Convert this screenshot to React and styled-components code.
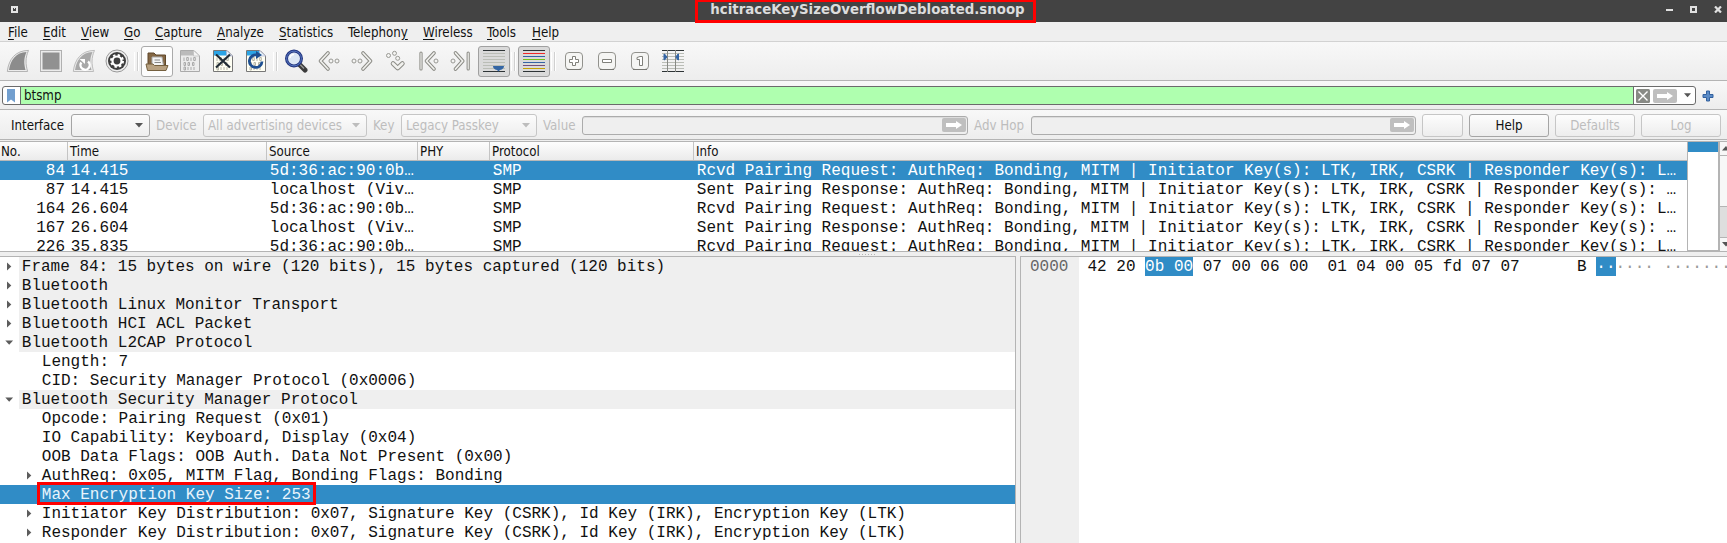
import React from "react";
import styled, { createGlobalStyle, css } from "styled-components";

const Global = createGlobalStyle`
  * { box-sizing: border-box; }
  html, body { margin: 0; padding: 0; overflow: hidden; background: #efefef; }
  #root { height: 543px; }
`;

const App_ = styled.div`
  width: 1727px;
  height: 543px;
  overflow: hidden;
  display: flex;
  flex-direction: column;
  background: #efefef;
  color: #111;
  font: 13.2px "DejaVu Sans Condensed", "DejaVu Sans", sans-serif;
  font-stretch: condensed;
  white-space: nowrap;
`;

const TitleBar = styled.header`
  height: 22px;
  flex: none;
  background: #434343;
  display: flex;
  align-items: center;
  padding: 0 5px 3px 11px;
  position: relative;
  svg { display: block; }
`;
const Title = styled.h1`
  position: absolute;
  left: 695px;
  top: -1px;
  width: 341px;
  height: 24px;
  margin: 0;
  padding-left: 4px;
  border: 3px solid #f00;
  text-align: center;
  font-family: "DejaVu Sans", sans-serif;
  font-stretch: normal;
  font-size: 13.33px;
  font-weight: bold;
  line-height: 16px;
  color: #dcdcdc;
`;
const WindowButtons = styled.div`
  margin-left: auto;
  display: flex;
  gap: 17px;
`;

const MenuBar = styled.nav`
  height: 20px;
  flex: none;
  display: flex;
  border-bottom: 1px solid #d2d2d2;
  padding-left: 8px;
`;
const MenuItem = styled.span`
  width: ${(p) => p.$w}px;
  flex: none;
  line-height: 21px;
  u { text-underline-offset: 2px; }
`;

const Toolbar = styled.div`
  height: 39px;
  flex: none;
  display: flex;
  align-items: center;
  gap: 1px;
  padding-left: 2px;
  background: linear-gradient(#f8f8f8, #ededed);
  border-bottom: 1px solid #b4b4b4;
`;
const ToolButton = styled.button`
  width: 32px;
  height: 31px;
  flex: none;
  padding: 0;
  display: flex;
  align-items: center;
  justify-content: center;
  border-radius: 3px;
  border: 1px solid transparent;
  background: none;
  ${(p) => p.$state === "raised" && css`border-color: #aaa; background: #fdfdfd;`}
  ${(p) => p.$state === "pressed" && css`border-color: #a0a0a0; background: #dadada;`}
  svg { display: block; flex: none; }
`;
const ToolSeparator = styled.i`
  width: 6px;
  height: 19px;
  flex: none;
  border-left: 2px solid transparent;
  background: linear-gradient(90deg, transparent 1px, #d0d0d0 1px, #d0d0d0 2px, #fff 2px, #fff 3px, transparent 3px);
`;

const FilterBar = styled.div`
  height: 29px;
  flex: none;
  display: flex;
  align-items: center;
  padding: 1px 0 0 2px;
  gap: 6px;
  background: linear-gradient(#f8f8f8, #ededed);
  border-bottom: 1px solid #b4b4b4;
`;
const FilterField = styled.div`
  width: 1694px;
  height: 19px;
  flex: none;
  display: flex;
  border: 1px solid #6b6b6b;
  border-radius: 3px;
  background: #fff;
  overflow: hidden;
`;
const BookmarkCell = styled.span`
  width: 17px;
  display: flex;
  justify-content: center;
  align-items: center;
`;
const FilterText = styled.span`
  flex: 1;
  padding-left: 3px;
  line-height: 17px;
  background: #afffaf;
  border: solid #6b6b6b;
  border-width: 0 1px;
`;
const FilterActions = styled.span`
  width: 61px;
  display: flex;
  align-items: center;
  padding-left: 2px;
`;

const WirelessBar = styled.div`
  height: 30px;
  flex: none;
  display: flex;
  align-items: center;
  padding: 1px 0 0 11px;
  background: linear-gradient(#f8f8f8, #ededed);
  border-bottom: 1px solid #b4b4b4;
`;
const Label = styled.span`
  width: ${(p) => p.$w}px;
  flex: none;
  padding-top: 1px;
  line-height: 20px;
  color: ${(p) => (p.$off ? "#bdbdbd" : "#111")};
`;
const box = css`
  width: ${(p) => p.$w}px;
  flex: none;
  display: flex;
  align-items: center;
  border-radius: 3px;
  margin-right: 6px;
`;
const Combo = styled.div`
  ${box}
  height: 23px;
  justify-content: space-between;
  padding: 1px 6px 0 4px;
  border: 1px solid ${(p) => (p.$off ? "#c6c6c6" : "#a5a5a5")};
  color: #bdbdbd;
  background: linear-gradient(#fcfcfc, #eee);
`;
const Field = styled.div`
  ${box}
  height: 19px;
  justify-content: flex-end;
  padding-right: 1px;
  border: 1px solid #acacac;
  background: #efefef;
  box-shadow: inset 0 1px #dcdcdc;
`;
const PushButton = styled.button`
  ${box}
  height: 23px;
  padding: 1px 0 0;
  justify-content: center;
  font: inherit;
  border: 1px solid ${(p) => (p.$off ? "#c6c6c6" : "#a5a5a5")};
  color: ${(p) => (p.$off ? "#bdbdbd" : "#111")};
  background: linear-gradient(#fdfdfd, #ededed);
`;

const PacketPane = styled.section`
  height: 111px;
  flex: none;
  display: flex;
  margin-top: 1px;
  border: solid #b4b4b4;
  border-width: 1px 0;
  background: #fff;
`;
const PacketTable = styled.div`
  width: 1687px;
  flex: none;
  overflow: hidden;
`;
const gridColumns = css`
  display: grid;
  grid-template-columns: 68px 199px 151px 72px 204px 1fr;
`;
const HeaderRow = styled.div`
  ${gridColumns}
  height: 19px;
  background: linear-gradient(#fdfdfd, #ebebeb);
  border-bottom: 1px solid #b8b8b8;
`;
const HeaderCell = styled.span`
  height: 18px;
  padding-left: 2px;
  line-height: 20px;
  border-right: 1px solid #c4c4c4;
  &:first-child { padding-left: 1px; }
  &:last-child { border: 0; }
`;
const mono = css`
  font-family: "Liberation Mono", monospace;
  font-size: 16px;
  line-height: 21px;
  white-space: pre;
`;
const PacketRow = styled.div`
  ${gridColumns}
  ${mono}
  height: 19px;
  color: ${(p) => (p.$selected ? "#fff" : "#111")};
  background: ${(p) => (p.$selected ? "#308cc6" : "#fff")};
`;
const Cell = styled.span`
  height: 19px;
  padding: 0 3px 0 2.8px;
  text-align: ${(p) => (p.$right ? "right" : "left")};
`;
const MiniMap = styled.div`
  width: 32px;
  flex: none;
  border: solid #b4b4b4;
  border-width: 0 1px 1px;
  background: linear-gradient(#308cc6 10px, #fff 10px);
`;
const ScrollBar = styled.div`
  width: 8px;
  flex: none;
  display: flex;
  flex-direction: column;
  border-left: 1px solid #b4b4b4;
  background: #dedede;
`;
const ScrollEnd = styled.div`
  height: 13px;
  flex: none;
  padding: 4px 0 0 2px;
  overflow: hidden;
  background: #f7f7f7;
  svg { display: block; }
`;
const ScrollThumb = styled.div`
  height: 52px;
  border: solid #b4b4b4;
  border-width: 1px 0;
  background: #f7f7f7;
`;
const ScrollTrack = styled.div`
  flex: 1;
  border-bottom: 1px solid #b4b4b4;
`;

const Splitter = styled.div`
  height: 4px;
  flex: none;
  display: flex;
  justify-content: center;
  align-items: center;
  padding-left: 7px;
`;
const Grip = styled.i`
  width: 17px;
  height: 1px;
  background: repeating-linear-gradient(90deg, #b4b4b4 0 1px, transparent 1px 3px);
`;

const DetailArea = styled.section`
  flex: 1;
  min-height: 0;
  display: flex;
  gap: 4px;
`;
const Tree = styled.div`
  ${mono}
  width: 1016px;
  flex: none;
  overflow: hidden;
  border: solid #b4b4b4;
  border-width: 1px 1px 0 0;
  background: #fff;
`;
const TreeRow = styled.div`
  height: 19px;
  display: flex;
  padding-left: ${(p) => p.$depth * 20}px;
  color: ${(p) => (p.$selected ? "#e8f4fc" : "#111")};
  background: ${(p) => (p.$selected ? "#308cc6" : "#fff")};
`;
const Expander = styled.span`
  width: 19px;
  flex: none;
  display: flex;
  align-items: center;
  padding-left: 5px;
`;
const TreeText = styled.span`
  flex: 1;
  position: relative;
  padding-left: 2.8px;
  background: ${(p) => (p.$shaded ? "#efefef" : "transparent")};
`;
const Highlight = styled.i`
  position: absolute;
  left: -2px;
  top: -3px;
  width: 279px;
  height: 23px;
  border: 3px solid #f00;
`;
const HexPane = styled.div`
  ${mono}
  flex: 1;
  display: flex;
  overflow: hidden;
  border: solid #b4b4b4;
  border-width: 1px 0 0 1px;
  background: #fff;
`;
const OffsetGutter = styled.div`
  width: 58px;
  flex: none;
  padding-left: 9px;
  color: #666;
  background: #efefef;
`;
const HexBytes = styled.div`
  width: 489.6px;
  flex: none;
  margin-left: 8.5px;
`;
const HexText = styled.div`
  color: #999;
  b { font-weight: normal; color: #111; }
`;
const Selected = styled.mark`
  display: inline-block;
  height: 19px;
  vertical-align: top;
  color: #fff;
  background: #308cc6;
`;

const Caret = ({ color = "#555", dir = "down", size = 8 }) => {
  const d = { down: "M0 0H8L4 4.5Z", up: "M0 4.5H8L4 0Z" }[dir];
  return <svg width={size} height="5" viewBox="0 0 8 5"><path d={d} fill={color} /></svg>;
};
const TreeArrow = ({ open }) => (
  <svg width="9" height="9" viewBox="0 0 9 9">
    <path d={open ? "M0.3 2.6H8.1L4.2 6.8Z" : "M2 0.5V8.5L6.3 4.5Z"} fill="#5c5c5c" />
  </svg>
);
const ApplyArrow = () => (
  <svg width="24" height="14" viewBox="0 0 24 14">
    <rect width="24" height="14" rx="2" fill="#bfbfbf" />
    <path d="M4 5H14V3L20 7L14 11V9H4Z" fill="#fff" />
  </svg>
);

const Svg = ({ children }) => <svg width="24" height="24" viewBox="0 0 24 24" fill="none">{children}</svg>;
const finPath = "M3 21C4.5 11 10 3.5 20.5 3C17.5 9.5 18 15 19.5 21Z";
const finEdge = "M1.3 22.5C2.8 10 9.5 1.6 22.5 1.4C19.2 9 19.5 15 21.6 22.5Z";

const Page = ({ children, faded }) => (
  <Svg>
    <path d="M2.5 1.5H16L21.5 7V22.5H2.5Z" fill={faded ? "#ececec" : "#fffff4"} stroke={faded ? "#aaa" : "#777"} />
    <path d="M3 2H15.5L16.5 6.5H3Z" fill={faded ? "#bbb" : "#2ba4e5"} />
    <path d="M15.5 1.5V7H21.5Z" fill={faded ? "#f4f4f4" : "#e8f5fb"} stroke={faded ? "#bbb" : "#aac"} strokeWidth=".6" />
    <path d="M6 8.5V12M8.7 8.5H10.3V11.5H8.7ZM13 8.5V12M15.7 8.5H17.3V11.5H15.7ZM6 13.5H7.5V16.5H6ZM10 13.5H11.5V16.5H10ZM14.5 13.5H16V16.5H14.5ZM6 18H7.5V21H6ZM10 18V21M13 18V21M16 18V21" stroke={faded ? "#aaa" : "#b6b6a6"} />
    {children}
  </Svg>
);
const Outlined = ({ d, width = 4.2, dots = [] }) => (
  <>
    {dots.map(([x, y]) => <circle key={`${x}-${y}`} cx={x} cy={y} r="2" fill="#f4f4f2" stroke="#999994" />)}
    <path d={d} stroke="#8c8c86" strokeWidth={width} strokeLinejoin="round" strokeLinecap="round" />
    <path d={d} stroke="#f1f1ee" strokeWidth={width - 2} strokeLinejoin="round" strokeLinecap="round" />
  </>
);
const KeyCap = ({ d }) => (
  <Svg>
    <rect x="3.5" y="3.5" width="17" height="17" rx="3.5" fill="#f5f5f3" stroke="#92928d" />
    <path d="M5 20.5H19" stroke="#777772" />
    <path d={d} fill="#fff" stroke="#80807a" strokeWidth="1" />
  </Svg>
);
const Lines = ({ colors, children }) => (
  <Svg>
    {colors.map((c, i) => <path key={i} d={`M1 ${1.5 + i * 3}H23`} stroke={c} strokeWidth="1" />)}
    {children}
  </Svg>
);

const grey = "#babdb6";
const ink = "#2e3436";
const icons = {
  start: <Svg><path d={finEdge} fill="#ececec" stroke="#b4b4b4" /><path d={finPath} fill="#8c8c8c" /></Svg>,
  stop: <Svg><rect x="1.5" y="1.5" width="21" height="21" fill="#ececec" stroke="#b0b0b0" /><rect x="3.5" y="3.5" width="17" height="17" fill="#919191" /></Svg>,
  restart: <Svg><path d={finEdge} fill="#ececec" stroke="#bcbcbc" /><path d={finPath} fill="#a8a8a8" /><path d="M9.3 13.5A4.6 4.6 0 1 0 16 12.5" stroke="#fff" strokeWidth="2.4" /><path d="M7.5 10H13V15Z" fill="#fff" /></Svg>,
  options: <Svg><circle cx="12" cy="12" r="11" fill="#eee" stroke="#999" /><circle cx="12" cy="12" r="9" fill="#3d3d3d" /><circle cx="12" cy="12" r="4.5" stroke="#fff" strokeWidth="2.2" /><circle cx="12" cy="12" r="6" stroke="#fff" strokeWidth="2" strokeDasharray="2.35 2.36" /></Svg>,
  open: <Svg><path d="M3 4H9L11 6H20.5V16H3Z" fill="#846744" stroke="#5e472a" /><path d="M7 8H17L18.5 17H7Z" fill="#f4f4f4" stroke="#aaa" /><path d="M9.5 11H15M9.5 13.5H16" stroke="#888" /><path d="M1 15H8L9.5 16.5H23L21 21.5H2.5Z" fill="#b8a181" stroke="#75603f" /></Svg>,
  save: <Page faded />,
  close: <Page><path d="M5 5.5L19 18.5M19 5.5L5 18.5" stroke="#222c35" strokeWidth="2.2" /></Page>,
  reload: <Page><path d="M13 6A6.3 6.3 0 1 0 18 12.5" stroke="#1d4f91" strokeWidth="2.8" /><path d="M12 2V10L18 6Z" fill="#1d4f91" /></Page>,
  find: <Svg><path d="M15.5 15.5L21 21" stroke="#3b3b3b" strokeWidth="5" strokeLinecap="round" /><path d="M16 15.5L20 19.5" stroke="#999" strokeWidth="1.2" /><circle cx="10" cy="9.5" r="7.5" fill="#dce7f5" stroke="#23357f" strokeWidth="3" /><circle cx="10" cy="9.5" r="7.4" stroke="#587ac5" strokeWidth="1" /><path d="M6 9A4 4 0 0 1 10 5.5" stroke="#fff" strokeWidth="1.5" /></Svg>,
  back: <Svg><Outlined d="M11 4L3.5 12L11 20" width={3.7} dots={[[14, 12], [20, 12]]} /></Svg>,
  forward: <Svg><Outlined d="M13 4L20.5 12L13 20" width={3.7} dots={[[4, 12], [10, 12]]} /></Svg>,
  goto: <Svg><Outlined d="M10 14.5L14.7 19L19.4 14.5" width={4.6} dots={[[5.5, 6.5], [11.5, 4.3], [14.7, 9.3]]} /></Svg>,
  first: <Svg><Outlined d="M5 4V20" width={3.2} /><Outlined d="M18 4L10.5 12L18 20" width={3.7} dots={[[20, 12]]} /></Svg>,
  last: <Svg><Outlined d="M19.2 4V20" width={3.2} /><Outlined d="M6.5 4L13.7 12L6.5 20" width={3.7} dots={[[4, 12]]} /></Svg>,
  scroll: <Lines colors={[ink, grey, grey, grey, grey, grey, grey, ink]}><path d="M11 17H22Q22 20 18 21L16.5 22.5L15 21Q11 20 11 17Z" fill="#3465a4" /></Lines>,
  colorize: <Lines colors={[ink, "#ef2929", "#3465a4", "#73c216", "#3465a4", "#75507b", "#c4a000", ink]} />,
  zoomIn: <KeyCap d="M10.5 7.5H13.5V10.5H16.5V13.5H13.5V16.5H10.5V13.5H7.5V10.5H10.5Z" />,
  zoomOut: <KeyCap d="M7.5 10.5H16.5V13.5H7.5Z" />,
  zoomOne: <KeyCap d="M9 8.5L12 7.5H14.5V16.5H11.5V10.5H9Z" />,
  resize: <Lines colors={[ink, grey, grey, grey, grey, grey, grey, ink]}><path d="M6.5 1V23M14.5 1V23" stroke="#888a85" /><path d="M3 5H3.5L6 8L3.5 11H3ZM17.5 5H17L14.8 8L17 11H17.5Z" fill="#3465a4" stroke="#3465a4" /></Lines>,
};

const tools = [
  ["start"], ["stop"], ["restart"], ["options"], null,
  ["open", "raised"], ["save"], ["close"], ["reload"], null,
  ["find"], ["back"], ["forward"], ["goto"], ["first"], ["last"], ["scroll", "pressed"], null,
  ["colorize", "pressed"], null,
  ["zoomIn"], ["zoomOut"], ["zoomOne"], ["resize"],
];

const menus = [
  ["", "F", "ile", 35], ["", "E", "dit", 38], ["", "V", "iew", 43], ["", "G", "o", 31],
  ["", "C", "apture", 62], ["", "A", "nalyze", 62], ["", "S", "tatistics", 69],
  ["Telephon", "y", "", 75], ["", "W", "ireless", 64], ["", "T", "ools", 45], ["", "H", "elp", 40],
];

const request = "Rcvd Pairing Request: AuthReq: Bonding, MITM | Initiator Key(s): LTK, IRK, CSRK | Responder Key(s): L…";
const response = "Sent Pairing Response: AuthReq: Bonding, MITM | Initiator Key(s): LTK, IRK, CSRK | Responder Key(s): …";
const remote = "5d:36:ac:90:0b…";
const local = "localhost (Viv…";
const packets = [
  [84, "14.415", remote, request],
  [87, "14.415", local, response],
  [164, "26.604", remote, request],
  [167, "26.604", local, response],
  [226, "35.835", remote, request],
];

const tree = [
  { t: "Frame 84: 15 bytes on wire (120 bits), 15 bytes captured (120 bits)", d: 0, a: "closed" },
  { t: "Bluetooth", d: 0, a: "closed" },
  { t: "Bluetooth Linux Monitor Transport", d: 0, a: "closed" },
  { t: "Bluetooth HCI ACL Packet", d: 0, a: "closed" },
  { t: "Bluetooth L2CAP Protocol", d: 0, a: "open" },
  { t: "Length: 7", d: 1 },
  { t: "CID: Security Manager Protocol (0x0006)", d: 1 },
  { t: "Bluetooth Security Manager Protocol", d: 0, a: "open" },
  { t: "Opcode: Pairing Request (0x01)", d: 1 },
  { t: "IO Capability: Keyboard, Display (0x04)", d: 1 },
  { t: "OOB Data Flags: OOB Auth. Data Not Present (0x00)", d: 1 },
  { t: "AuthReq: 0x05, MITM Flag, Bonding Flags: Bonding", d: 1, a: "closed" },
  { t: "Max Encryption Key Size: 253", d: 1, selected: true },
  { t: "Initiator Key Distribution: 0x07, Signature Key (CSRK), Id Key (IRK), Encryption Key (LTK)", d: 1, a: "closed" },
  { t: "Responder Key Distribution: 0x07, Signature Key (CSRK), Id Key (IRK), Encryption Key (LTK)", d: 1, a: "closed" },
];

export default function App() {
  return (
    <App_>
      <Global />
      <TitleBar>
        <svg width="7" height="7"><path d="M0 0H7V7H0Z" fill="#e4e4e4" /><path d="M2 2H5V5H2Z" fill="#434343" /><path d="M3 2H4V3H3Z" fill="#e4e4e4" /></svg>
        <Title>hcitraceKeySizeOverflowDebloated.snoop</Title>
        <WindowButtons>
          <svg width="7" height="7"><path d="M0 3H7V5H0Z" fill="#e0e0e0" /></svg>
          <svg width="7" height="7"><path d="M1 1H6V6H1Z" fill="none" stroke="#e0e0e0" strokeWidth="2" /></svg>
          <svg width="8" height="7"><path d="M1 0.5L7 6.5M7 0.5L1 6.5" stroke="#e0e0e0" strokeWidth="2.2" /></svg>
        </WindowButtons>
      </TitleBar>

      <MenuBar>
        {menus.map(([pre, key, post, w]) => (
          <MenuItem key={pre + key + post} $w={w}>{pre}<u>{key}</u>{post}</MenuItem>
        ))}
      </MenuBar>

      <Toolbar>
        {tools.map((tool, i) =>
          tool ? <ToolButton key={i} $state={tool[1]}>{icons[tool[0]]}</ToolButton> : <ToolSeparator key={i} />
        )}
      </Toolbar>

      <FilterBar>
        <FilterField>
          <BookmarkCell>
            <svg width="9" height="15"><path d="M0 1H8V14.5L4 11.5L0 14.5Z" fill="#729fcf" /></svg>
          </BookmarkCell>
          <FilterText>btsmp</FilterText>
          <FilterActions>
            <svg width="14" height="14"><rect width="14" height="14" rx="1.5" fill="#888a85" /><path d="M2.5 2.5L11.5 11.5M11.5 2.5L2.5 11.5" stroke="#fff" strokeWidth="1.4" /></svg>
            <span style={{ width: 3 }} />
            <ApplyArrow />
            <span style={{ width: 7 }} />
            <Caret size={7} />
          </FilterActions>
        </FilterField>
        <svg width="12" height="12"><path d="M4.5 1H7.5V4.5H11V7.5H7.5V11H4.5V7.5H1V4.5H4.5Z" fill="#5b8bc6" stroke="#33619f" strokeLinejoin="round" /></svg>
      </FilterBar>

      <WirelessBar>
        <Label $w={60}>Interface</Label>
        <Combo $w={79}><span /><Caret /></Combo>
        <Label $w={47} $off>Device</Label>
        <Combo $w={164} $off>All advertising devices<Caret color="#bdbdbd" /></Combo>
        <Label $w={28} $off>Key</Label>
        <Combo $w={136} $off>Legacy Passkey<Caret color="#bdbdbd" /></Combo>
        <Label $w={39} $off>Value</Label>
        <Field $w={386}><ApplyArrow /></Field>
        <Label $w={57} $off>Adv Hop</Label>
        <Field $w={385}><ApplyArrow /></Field>
        <PushButton $w={41} $off />
        <PushButton $w={80}>Help</PushButton>
        <PushButton $w={80} $off>Defaults</PushButton>
        <PushButton $w={80} $off>Log</PushButton>
      </WirelessBar>

      <PacketPane>
        <PacketTable>
          <HeaderRow>
            {["No.", "Time", "Source", "PHY", "Protocol", "Info"].map((h) => <HeaderCell key={h}>{h}</HeaderCell>)}
          </HeaderRow>
          {packets.map(([no, time, source, info], i) => (
            <PacketRow key={no} $selected={i === 0}>
              <Cell $right>{no}</Cell>
              <Cell>{time}</Cell>
              <Cell>{source}</Cell>
              <Cell />
              <Cell>SMP</Cell>
              <Cell>{info}</Cell>
            </PacketRow>
          ))}
        </PacketTable>
        <MiniMap />
        <ScrollBar>
          <ScrollEnd><Caret dir="up" /></ScrollEnd>
          <ScrollThumb />
          <ScrollTrack />
          <ScrollEnd><Caret /></ScrollEnd>
        </ScrollBar>
      </PacketPane>

      <Splitter><Grip /></Splitter>

      <DetailArea>
        <Tree>
          {tree.map((row) => (
            <TreeRow key={row.t} $depth={row.d} $selected={row.selected}>
              <Expander>{row.a && <TreeArrow open={row.a === "open"} />}</Expander>
              <TreeText $shaded={row.d === 0}>
                {row.t}
                {row.selected && <Highlight />}
              </TreeText>
            </TreeRow>
          ))}
        </Tree>
        <HexPane>
          <OffsetGutter>0000</OffsetGutter>
          <HexBytes>42 20 <Selected>0b 00</Selected> 07 00 06 00  01 04 00 05 fd 07 07</HexBytes>
          <HexText><b>B</b> <Selected>··</Selected>···· ·······</HexText>
        </HexPane>
      </DetailArea>
    </App_>
  );
}
